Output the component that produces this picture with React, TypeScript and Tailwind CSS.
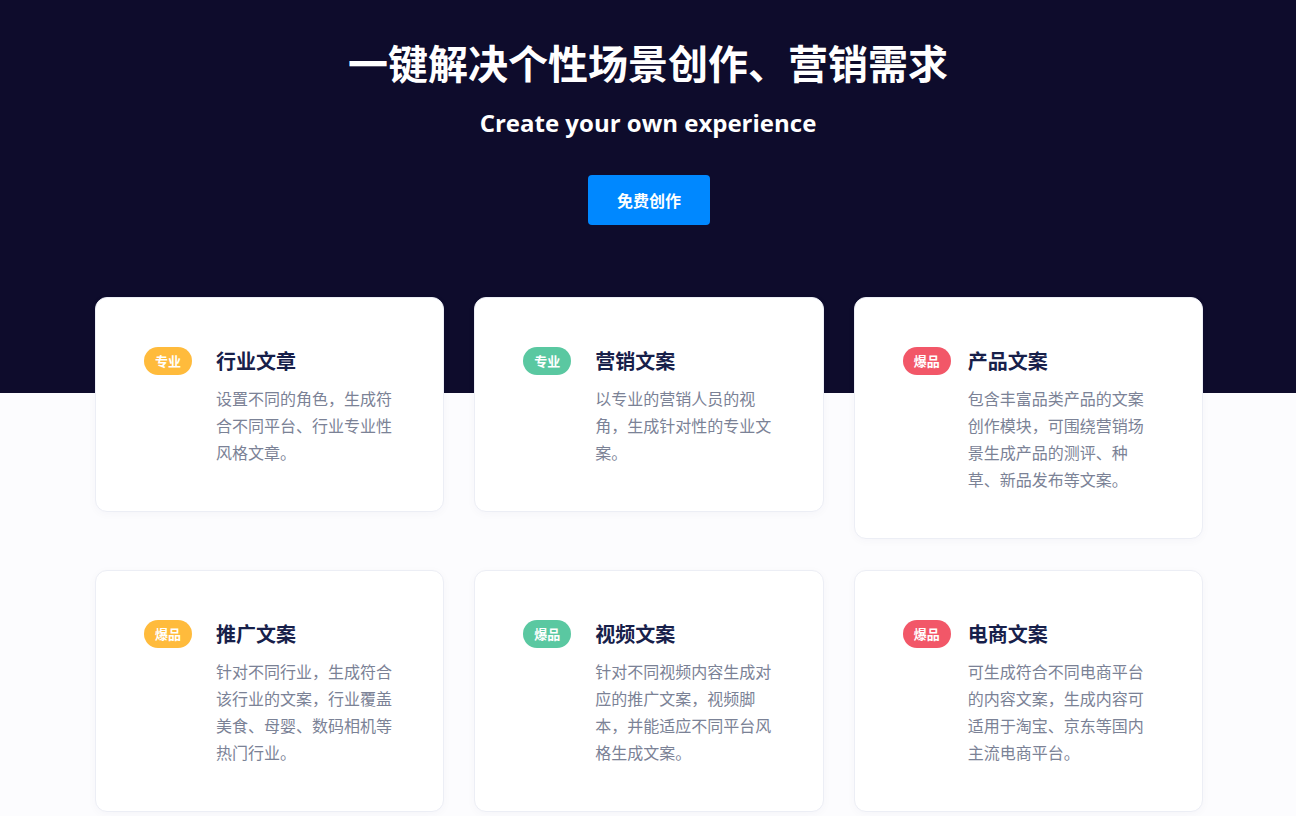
import React from "react";

type Card = {
    tag: string;
    tagColor: string;
    title: string;
    desc: string;
    gap: string;
};

const cards: Card[] = [
    {
        tag: "专业",
        tagColor: "bg-[#ffbb3c]",
        title: "行业文章",
        desc: "设置不同的角色，生成符合不同平台、行业专业性风格文章。",
        gap: "gap-[24px]",
    },
    {
        tag: "专业",
        tagColor: "bg-[#5ac8a1]",
        title: "营销文案",
        desc: "以专业的营销人员的视角，生成针对性的专业文案。",
        gap: "gap-[24px]",
    },
    {
        tag: "爆品",
        tagColor: "bg-[#f25768]",
        title: "产品文案",
        desc: "包含丰富品类产品的文案创作模块，可围绕营销场景生成产品的测评、种草、新品发布等文案。",
        gap: "gap-[17px]",
    },
    {
        tag: "爆品",
        tagColor: "bg-[#ffbb3c]",
        title: "推广文案",
        desc: "针对不同行业，生成符合该行业的文案，行业覆盖美食、母婴、数码相机等热门行业。",
        gap: "gap-[24px]",
    },
    {
        tag: "爆品",
        tagColor: "bg-[#5ac8a1]",
        title: "视频文案",
        desc: "针对不同视频内容生成对应的推广文案，视频脚本，并能适应不同平台风格生成文案。",
        gap: "gap-[24px]",
    },
    {
        tag: "爆品",
        tagColor: "bg-[#f25768]",
        title: "电商文案",
        desc: "可生成符合不同电商平台的内容文案，生成内容可适用于淘宝、京东等国内主流电商平台。",
        gap: "gap-[17px]",
    },
];

const cjk = "font-['Noto_Sans_CJK_SC','Noto_Sans',sans-serif]";

function FeatureCard({ card }: { card: Card }) {
    return (
        <div
            className={`flex ${card.gap} rounded-[12px] border border-[#eceef5] bg-white px-[48px] pb-[45px] pt-[49px] shadow-[0_2px_10px_rgba(30,40,90,0.03)]`}
        >
            <span
                className={`flex h-[28px] w-[48px] shrink-0 items-center justify-center rounded-full text-[13px] font-bold text-white ${card.tagColor}`}
            >
                {card.tag}
            </span>
            <div className="flex-1">
                <h3 className="text-[20px] font-bold leading-[28px] text-[#17204a]">
                    {card.title}
                </h3>
                <p className="mt-[10px] text-[16px] leading-[27px] text-[#7b8296]">
                    {card.desc}
                </p>
            </div>
        </div>
    );
}

export default function App() {
    return (
        <main className={`min-h-[816px] bg-[#fcfcfe] ${cjk}`}>
            <section className="flex h-[393px] flex-col items-center bg-[#0e0c2c] pt-[38px]">
                <h1 className="text-[40px] font-bold leading-[48px] text-white">
                    一键解决个性场景创作、营销需求
                </h1>
                <p className="mt-[21px] font-['Open_Sans',sans-serif] text-[24px] font-bold leading-[32px] text-white">
                    Create your own experience
                </p>
                <button
                    type="button"
                    className="mt-[36px] ml-[2px] h-[50px] w-[122px] rounded-[4px] bg-[#0088ff] text-[16px] font-bold text-white"
                >
                    免费创作
                </button>
            </section>

            <section className="-mt-[96px] ml-[95px] grid w-[1108px] grid-cols-3 items-start gap-x-[30px] gap-y-[31px] pb-[10px]">
                {cards.map((card) => (
                    <FeatureCard key={card.title} card={card} />
                ))}
            </section>
        </main>
    );
}
